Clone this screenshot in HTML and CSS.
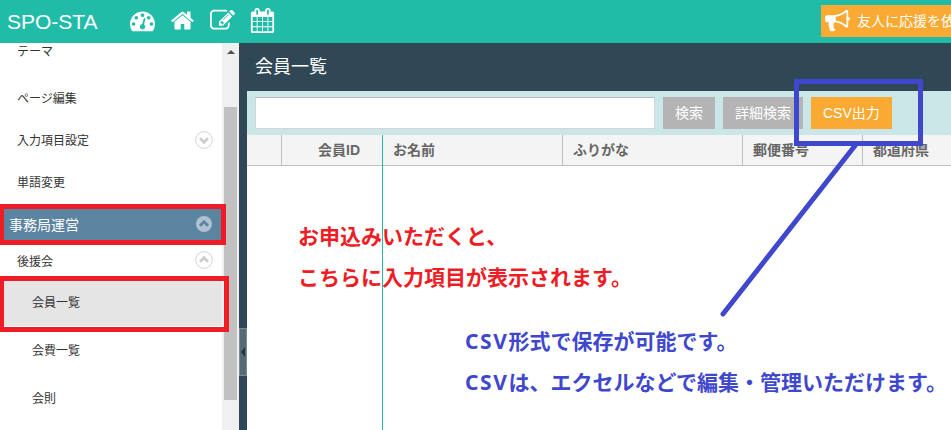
FILE: index.html
```html
<!DOCTYPE html>
<html lang="ja">
<head>
<meta charset="utf-8">
<title>SPO-STA</title>
<link rel="stylesheet" href="styles.css">
</head>
<body>
<header class="topbar">
  <span class="brand">SPO-STA</span>
  <nav class="tools">
    <svg class="icon" viewBox="0 0 1792 1792"><path d="M384 1152q0-53-37.5-90.5t-90.5-37.5-90.5 37.5-37.5 90.5 37.5 90.5 90.5 37.5 90.5-37.5 37.5-90.5zm192-448q0-53-37.5-90.5t-90.5-37.5-90.5 37.5-37.5 90.5 37.5 90.5 90.5 37.5 90.5-37.5 37.5-90.5zm428 481l101-382q6-26-7.5-48.5t-38.5-29.5-48 6.5-30 39.5l-101 382q-60 5-107 43.5t-63 98.5q-20 77 20 146t117 89 146-20 89-117q16-60-6-117t-72-91zm660-33q0-53-37.5-90.5t-90.5-37.5-90.5 37.5-37.5 90.5 37.5 90.5 90.5 37.5 90.5-37.5 37.5-90.5zm-640-640q0-53-37.5-90.5t-90.5-37.5-90.5 37.5-37.5 90.5 37.5 90.5 90.5 37.5 90.5-37.5 37.5-90.5zm448 192q0-53-37.5-90.5t-90.5-37.5-90.5 37.5-37.5 90.5 37.5 90.5 90.5 37.5 90.5-37.5 37.5-90.5zm320 448q0 261-141 483-19 29-54 29h-1402q-35 0-54-29-141-221-141-483 0-182 71-348t191-286 286-191 348-71 348 71 286 191 191 286 71 348z"/></svg>
    <svg class="icon" viewBox="0 0 1792 1792"><path d="M1472 992v480q0 26-19 45t-45 19h-384v-384h-256v384h-384q-26 0-45-19t-19-45v-480q0-1 .5-3t.5-3l575-474 575 474q1 2 1 6zm223-69l-62 74q-8 9-21 11h-3q-13 0-21-7l-692-577-692 577q-12 8-24 7-13-2-21-11l-62-74q-8-10-7-23.5t11-21.5l719-599q32-26 76-26t76 26l244 204v-195q0-14 9-23t23-9h192q14 0 23 9t9 23v408l219 182q10 8 11 21.5t-7 23.5z"/></svg>
    <svg class="icon" viewBox="0 0 1792 1792"><path d="M888 1184l116-116-152-152-116 116v56h96v96h56zm440-720q-16-16-33 1l-350 350q-17 17-1 33t33-1l350-350q17-17 1-33zm80 594v190q0 119-84.5 203.5t-203.5 84.5h-832q-119 0-203.5-84.5t-84.5-203.5v-832q0-119 84.5-203.5t203.5-84.5h832q63 0 117 25 15 7 18 23 3 17-9 29l-49 49q-14 14-32 8-23-6-45-6h-832q-66 0-113 47t-47 113v832q0 66 47 113t113 47h832q66 0 113-47t47-113v-126q0-13 9-22l64-64q15-15 35-7t20 29zm-96-738l288 288-672 672h-288v-288zm444 132l-92 92-288-288 92-92q28-28 68-28t68 28l152 152q28 28 28 68t-28 68z"/></svg>
    <svg class="icon" viewBox="0 0 1792 1792"><path d="M192 1664h288v-288h-288v288zm352 0h320v-288h-320v288zm-352-352h288v-320h-288v320zm352 0h320v-320h-320v320zm-352-384h288v-288h-288v288zm736 736h320v-288h-320v288zm-384-736h320v-288h-320v288zm768 736h288v-288h-288v288zm-384-352h320v-320h-320v320zm-352-864v-288q0-13-9.5-22.5t-22.5-9.5h-64q-13 0-22.5 9.5t-9.5 22.5v288q0 13 9.5 22.5t22.5 9.5h64q13 0 22.5-9.5t9.5-22.5zm736 864h288v-320h-288v320zm-384-384h320v-288h-320v288zm384 0h288v-288h-288v288zm32-480v-288q0-13-9.5-22.5t-22.5-9.5h-64q-13 0-22.5 9.5t-9.5 22.5v288q0 13 9.5 22.5t22.5 9.5h64q13 0 22.5-9.5t9.5-22.5zm384-64v1280q0 52-38 90t-90 38h-1408q-52 0-90-38t-38-90v-1280q0-52 38-90t90-38h128v-96q0-66 47-113t113-47h64q66 0 113 47t47 113v96h384v-96q0-66 47-113t113-47h64q66 0 113 47t47 113v96h128q52 0 90 38t38 90z"/></svg>
  </nav>
  <div class="invite">
    <svg class="icon" viewBox="0 0 1792 1792"><path d="M1664 640q53 0 90.500 37.500t37.500 90.500-37.500 90.500-90.500 37.500v384q0 52-38 90t-90 38q-417-347-812-380-58 19-91 66t-31 100.500 40 92.500q-20 33-23 65.500t6 58 33.500 55 48 50 61.500 50.500q-29 58-111.500 83t-168.500 11.500-132-55.500q-7-23-29.500-87.500t-32-94.500-23-89-15-101 3.500-98.500 22-110.500h-122q-66 0-113-47t-47-113v-192q0-66 47-113t113-47h480q435 0 896-384 52 0 90 38t38 90v384zm-128 604v-954q-394 302-768 343v270q377 42 768 341z"/></svg>
    <span>友人に応援を依</span>
  </div>
</header>
<div class="layout">
  <aside class="sidebar">
    <ul class="menu">
      <li class="item tall first">テーマ</li>
      <li class="item">ページ編集</li>
      <li class="item">入力項目設定
        <svg class="chev" viewBox="0 0 18 18"><circle cx="9" cy="9" r="8.300"/><path d="M5 7.200l4 4 4-4"/></svg></li>
      <li class="item">単語変更</li>
      <li class="group">事務局運営
        <svg class="chev solid" viewBox="0 0 18 18"><circle cx="9" cy="9" r="8"/><path d="M5 10.800l4-4 4 4"/></svg><i class="mark mark-group"></i></li>
      <li class="item short">後援会
        <svg class="chev" viewBox="0 0 18 18"><circle cx="9" cy="9" r="8.300"/><path d="M5 10.800l4-4 4 4"/></svg></li>
      <li class="item sub active">会員一覧<i class="mark mark-active"></i></li>
      <li class="item sub tall">会費一覧</li>
      <li class="item sub tall">会則</li>
    </ul>
    <div class="scroll"><i class="arrow"></i><i class="thumb"></i></div>
  </aside>
  <div class="divider"><span class="handle"></span></div>
  <main class="main">
    <h1 class="title">会員一覧</h1>
    <div class="search">
      <input class="field" type="text">
      <span class="btn">検索</span>
      <span class="btn">詳細検索</span>
      <span class="btn csv">CSV出力</span>
      <svg class="callout" viewBox="0 0 170 250"><rect x="36.500" y="7.500" width="124" height="62"/><path d="M95.500 71L-37 240"/></svg>
    </div>
    <div class="table">
      <div class="row">
        <span class="cell"></span><span class="cell id">会員ID</span><span class="cell">お名前</span><span class="cell">ふりがな</span><span class="cell">郵便番号</span><span class="cell">都道府県</span>
      </div>
      <div class="content">
        <p class="note red">お申込みいただくと、<br>こちらに入力項目が表示されます。</p>
        <p class="note blue"><span class="latin">CSV</span>形式で保存が可能です。<br><span class="latin">CSV</span>は、エクセルなどで編集・管理いただけます。</p>
      </div>
      <i class="freeze"></i>
    </div>
  </main>
</div>
</body>
</html>
```
FILE: styles.css
```css
* { box-sizing: border-box; }
body {
  margin: 0;
  height: 430px;
  overflow: hidden;
  font-family: "Liberation Sans", "Noto Sans CJK JP", sans-serif;
  color: #333;
}
.topbar {
  height: 43px;
  background: #20bca8;
  display: flex;
  color: #fff;
}
.brand { width: 130px; padding-left: 7px; font-size: 21px; line-height: 43px; }
.tools { display: flex; gap: 15px; padding-top: 8px; }
.icon { width: 25px; height: 25px; fill: #fff; flex: none; }
.invite {
  margin: 5px 0 0 auto;
  width: 130px;
  height: 32px;
  padding: 0 0 2px 4px;
  background: #faaa32;
  display: flex;
  align-items: center;
  gap: 7px;
  overflow: hidden;
  white-space: nowrap;
  font-size: 14px;
}
.layout { display: flex; height: 387px; }
.sidebar { width: 239px; display: flex; background: #fff; }
.menu { list-style: none; margin: 0; padding: 0; width: 222px; }
.item, .group {
  position: relative;
  display: flex;
  align-items: center;
  justify-content: space-between;
  height: 42px;
  padding: 0 9px 1px 17px;
  font-size: 12px;
}
.item.tall { height: 48px; padding-bottom: 2px; }
.item.first { height: 50px; margin-top: -16px; padding-bottom: 4px; }
.item.sub { padding-left: 32px; }
.item.short { height: 31px; padding-bottom: 1px; }
.item.active { height: 50px; padding-bottom: 0; background: #e5e5e5; }
.group { height: 41px; padding: 0 9px 1px; background: #5b84a1; color: #fff; font-size: 14px; margin-top: 1px; }
.mark { position: absolute; border: 5px solid #ee1c24; border-left-width: 4px; z-index: 2; }
.mark-group { left: 0; top: 0; width: 226px; height: 41px; }
.mark-active { left: 0; top: 0; width: 229px; height: 56px; }
.chev { width: 18px; height: 18px; fill: none; stroke: #ddd; stroke-width: 1.2; }
.chev path { stroke: #ccc; stroke-width: 2.8; }
.solid { stroke: none; }
.solid circle { fill: #adc1d0; }
.solid path { stroke: #5b84a1; }
.scroll { width: 17px; background: #f0f0f0; display: flex; flex-direction: column; align-items: center; }
.arrow { margin-top: 7px; border: 4px solid transparent; border-top: 0; border-bottom-color: #505050; }
.thumb { width: 13px; height: 293px; margin-top: 53px; background: #c1c1c1; }
.divider { width: 8px; background: #304856; padding-top: 285px; }
.handle {
  display: flex;
  align-items: center;
  justify-content: center;
  height: 48px;
  background: #566b76;
  border: 1px solid #788b94;
}
.handle::before { content: ""; border: 5px solid transparent; border-left: 0; border-right: 4px solid #203642; }
.main { flex: 1; min-width: 0; display: flex; flex-direction: column; }
.title { margin: 0; height: 48px; padding-left: 8px; background: #304856; color: #fff; font-size: 18px; font-weight: 400; line-height: 48px; }
.search { position: relative; height: 44px; padding: 6px 8px; display: flex; gap: 8px; background: #cae6e7; }
.field { width: 400px; height: 32px; padding: 0; border: 1px solid #d5d5d5; border-top-color: #bbb; background: #fff; }
.btn { height: 32px; padding: 0 12px; background: #b4b4b4; color: #fff; font-size: 14px; line-height: 32px; white-space: nowrap; }
.csv { width: 81px; background: #faaa32; }
.callout { position: absolute; left: 513px; top: -17px; width: 170px; height: 250px; overflow: visible; fill: none; stroke: #3f48cc; stroke-width: 5; stroke-linecap: round; z-index: 2; }
.table { position: relative; flex: 1; background: #fff; }
.row { display: grid; grid-template-columns: 35px 101px 180px 180px 120px 88px; height: 31px; background: #f4f4f4; border-bottom: 1px solid #bfbfbf; }
.cell { padding-left: 10px; border-right: 1px solid #bfbfbf; color: #666; font-size: 14px; font-weight: 600; line-height: 30px; white-space: nowrap; }
.cell:last-child { border-right: 0; }
.cell.id { padding: 0 22px 0 0; text-align: right; }
.freeze { position: absolute; left: 135px; top: 0; bottom: 0; width: 1px; background: #20bca8; }
.content { padding: 50px 0 0 51px; }
.note { margin: 0; font-size: 21px; font-weight: 700; line-height: 41px; white-space: nowrap; }
.red { color: #ee1c24; }
.blue { color: #3f48cc; margin: 23px 0 0 167px; }
.latin { font-family: "Noto Sans", sans-serif; letter-spacing: 1.6px; }
```
